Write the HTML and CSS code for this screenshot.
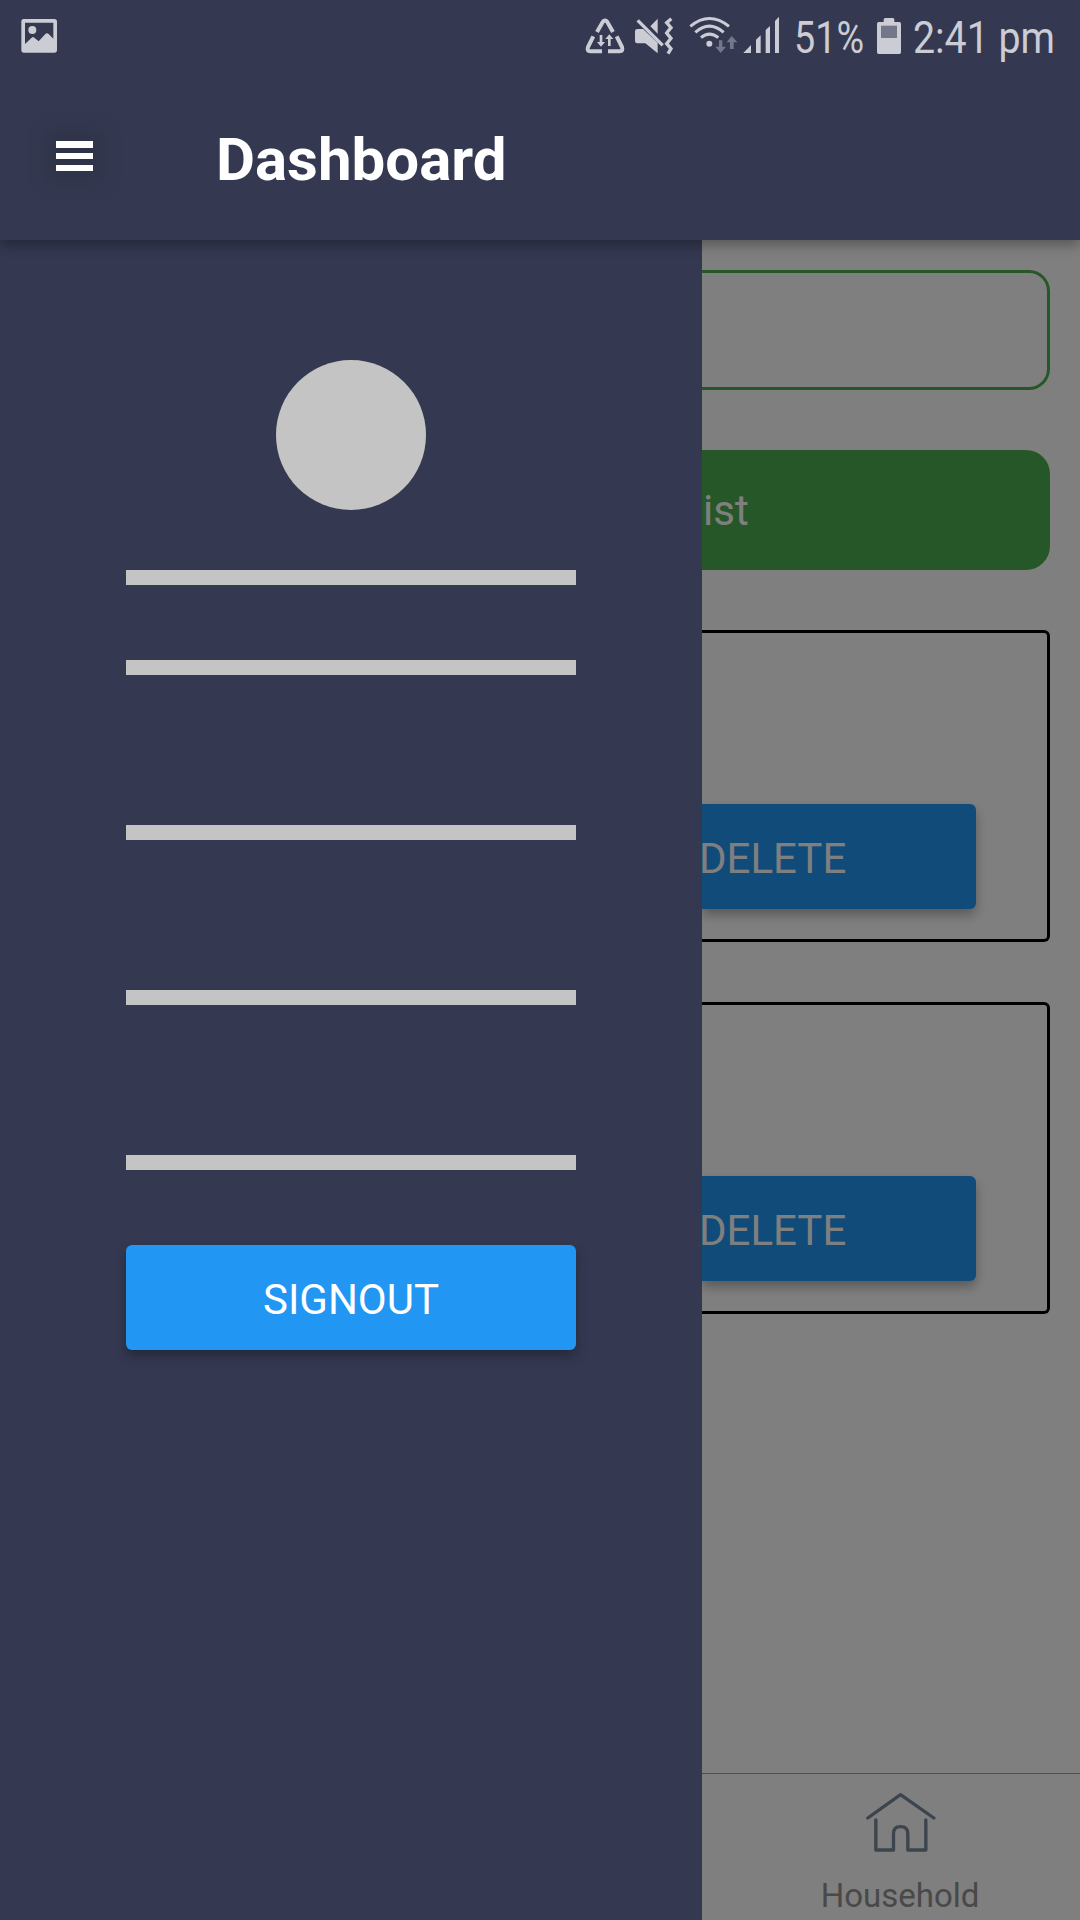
FILE: index.html
```html
<!DOCTYPE html>
<html lang="en">
<head>
<meta charset="utf-8">
<title>Dashboard</title>
<link rel="stylesheet" href="styles.css">
</head>
<body>
<div class="screen">
  <header class="header">
    <div class="status">
      <svg class="photo" viewBox="60 0 114 240"><path fill-rule="evenodd" d="M71 57H163Q171 57 171 65V150Q171 158 163 158H72Q64 158 64 150V65Q64 57 71 57ZM75 68V132L95 113Q99 109 103 113L116 124L136 102Q141 97 146 102L160 116V68Z"/><circle cx="97" cy="90" r="12"/></svg>
      <div class="indicators">
        <svg class="recycle" viewBox="45 0 120 240">
          <g class="line" stroke-width="12"><path d="M81 96L98 66Q105 57 112 66L129 96"/><path d="M70 109L54 141Q50 154 61 154H96"/><path d="M140 109L156 141Q160 154 149 154H114"/></g>
          <path d="M89 105H97V126H105L93 140L81 126H89ZM114 138H122V117H130L118 103L106 117H114Z"/>
        </svg>
        <svg class="mute" viewBox="189 0 126 240">
          <path d="M202 87H219L263 128V160L226 130H202Q195 130 195 123V94Q195 87 202 87ZM241 79L263 56V101Z"/>
          <path class="line" stroke-width="10" d="M203 61L278 136"/>
          <path class="line" stroke-width="10" d="M304 56L290 68L303 83L290 99L303 115L290 131L303 146L294 161"/>
        </svg>
        <svg class="wifi" viewBox="351 0 156 240">
          <g class="line" stroke-width="9"><path d="M361 79Q418 32 477 79"/><path d="M376 97Q418 60 461 97"/><path d="M393 113Q418 92 445 113"/></g>
          <circle cx="418" cy="131" r="9"/>
          <path class="faint" d="M447 121H457V140H468L452 159L436 140H447ZM480 147H491V127H502L485 108L470 127H480Z"/>
        </svg>
        <svg class="signal" viewBox="516 0 120 240"><path d="M520 159L543 135V159ZM558 159V119L572 106V159ZM587 159V90L600 78V159ZM615 159V63L627 50V159Z"/></svg>
        <svg class="percent" viewBox="0 0 70 80"><text x="0" y="53" textLength="70" lengthAdjust="spacingAndGlyphs">51%</text></svg>
        <svg class="battery" viewBox="288 0 78 240"><path d="M316 54H339Q343 54 343 59V66H358Q363 66 363 71V157Q363 162 358 162H296Q291 162 291 157V71Q291 66 296 66H311V59Q311 54 316 54Z"/><path class="drained" d="M303 77H351V114H303Z"/></svg>
        <svg class="clock" viewBox="0 0 142 80"><text x="0" y="53" textLength="142" lengthAdjust="spacingAndGlyphs">2:41 pm</text></svg>
      </div>
    </div>
    <div class="toolbar">
      <div class="menu"><i></i><i></i><i></i></div>
      <h1 class="title">Dashboard</h1>
    </div>
  </header>
  <main class="body">
    <aside class="drawer">
      <div class="avatar"></div>
      <div class="rule near"></div>
      <div class="rule"></div>
      <div class="rule"></div>
      <div class="rule"></div>
      <div class="rule near"></div>
      <div class="button signout"><span>SIGNOUT</span></div>
    </aside>
    <section class="content">
      <div class="field"></div>
      <div class="list">ist</div>
      <div class="card"><div class="button delete"><span>DELETE</span></div></div>
      <div class="card"><div class="button delete"><span>DELETE</span></div></div>
      <nav class="tabs">
        <div class="tab">
          <svg class="home" viewBox="555 120 212 192"><path d="M563 204L661 134L761 204M587 210V300H640V251Q640 230 661 230Q683 230 683 251V300H737V210"/></svg>
          <span class="label">Household</span>
        </div>
      </nav>
    </section>
  </main>
</div>
</body>
</html>
```

FILE: styles.css
```css
* { box-sizing: border-box; }
body { margin: 0; font-family: Roboto, sans-serif; }
.screen { width: 1080px; height: 1920px; overflow: hidden; display: flex; flex-direction: column; background: #343951; }

.header { position: relative; z-index: 2; height: 240px; flex: none; background: #343951; box-shadow: 0 5px 12px rgba(0, 0, 0, .32); }
.status { height: 80px; padding: 0 25px 0 20px; display: flex; justify-content: space-between; }
.status svg { display: block; height: 80px; flex: none; fill: #cbccd4; overflow: visible; }
.status .line { fill: none; stroke: #cbccd4; }
.status .faint, .status .drained { fill: #747789; }
.status text { font: 45px Roboto, sans-serif; }
.indicators { display: flex; }
.photo { width: 38px; }
.recycle { width: 40px; margin-right: 8px; }
.mute { width: 42px; margin-right: 12px; }
.wifi { width: 52px; margin-right: 3px; }
.signal { width: 40px; margin-right: 12px; }
.percent { width: 70px; margin-right: 12px; }
.battery { width: 26px; margin-right: 11px; }
.clock { width: 142px; }
.toolbar { display: flex; height: 160px; padding-left: 56px; align-items: flex-start; }
.menu { width: 37px; height: 30px; margin: 61px 123px 0 0; display: flex; flex-direction: column; justify-content: space-between; background: rgba(45, 50, 68, .75); box-shadow: 0 0 18px 8px rgba(45, 50, 68, .75); }
.menu i { height: 6.5px; background: #fff; }
.title { margin: 45px 0 0; font-size: 60px; line-height: 70px; font-weight: 700; color: #fff; }

.body { flex: 1; display: flex; min-height: 0; }
.drawer { width: 702px; padding: 120px 126px 0; }
.avatar { width: 150px; height: 150px; margin: 0 auto 60px; border-radius: 50%; background: #c4c4c4; }
.rule { height: 15px; margin-bottom: 150px; background: #c4c4c4; }
.near { margin-bottom: 75px; }
.button { height: 105px; display: flex; align-items: center; border-radius: 6px; background: #2196f3; color: #fff; font-size: 42px; line-height: 50px; box-shadow: 0 6px 12px rgba(0, 0, 0, .3); }
.signout { justify-content: center; padding-top: 5px; }

.content { position: relative; width: 378px; overflow: hidden; display: flex; flex-direction: column; padding-top: 30px; background: #fff; }
.content::after { content: ""; position: absolute; inset: 0; background: rgba(0, 0, 0, .5); }
.field { height: 120px; margin: 0 30px 60px 0; border: 3px solid #4caf50; border-left: 0; border-radius: 0 21px 21px 0; }
.list { height: 120px; margin: 0 30px 60px 0; padding: 0 0 0 1px; display: flex; align-items: center; border-radius: 0 24px 24px 0; background: #4caf50; color: #fff; font-size: 42px; }
.card { height: 312px; margin: 0 30px 60px 0; padding: 171px 71px 0 0; border: 3px solid #000; border-left: 0; border-radius: 0 6px 6px 0; }
.delete { border-radius: 0 6px 6px 0; padding-top: 5px; }
.delete span { margin-left: -3px; }
.tabs { height: 147px; margin-top: auto; border-top: 1px solid #a0a0a0; padding-left: 18px; }
.tab { display: flex; flex-direction: column; align-items: center; }
.home { width: 71px; height: 64px; margin: 16px 0 0; fill: none; stroke: #78889b; stroke-width: 10; stroke-linejoin: round; stroke-linecap: round; }
.label { margin-top: 22px; font-size: 33px; line-height: 40px; color: #929292; }
```
